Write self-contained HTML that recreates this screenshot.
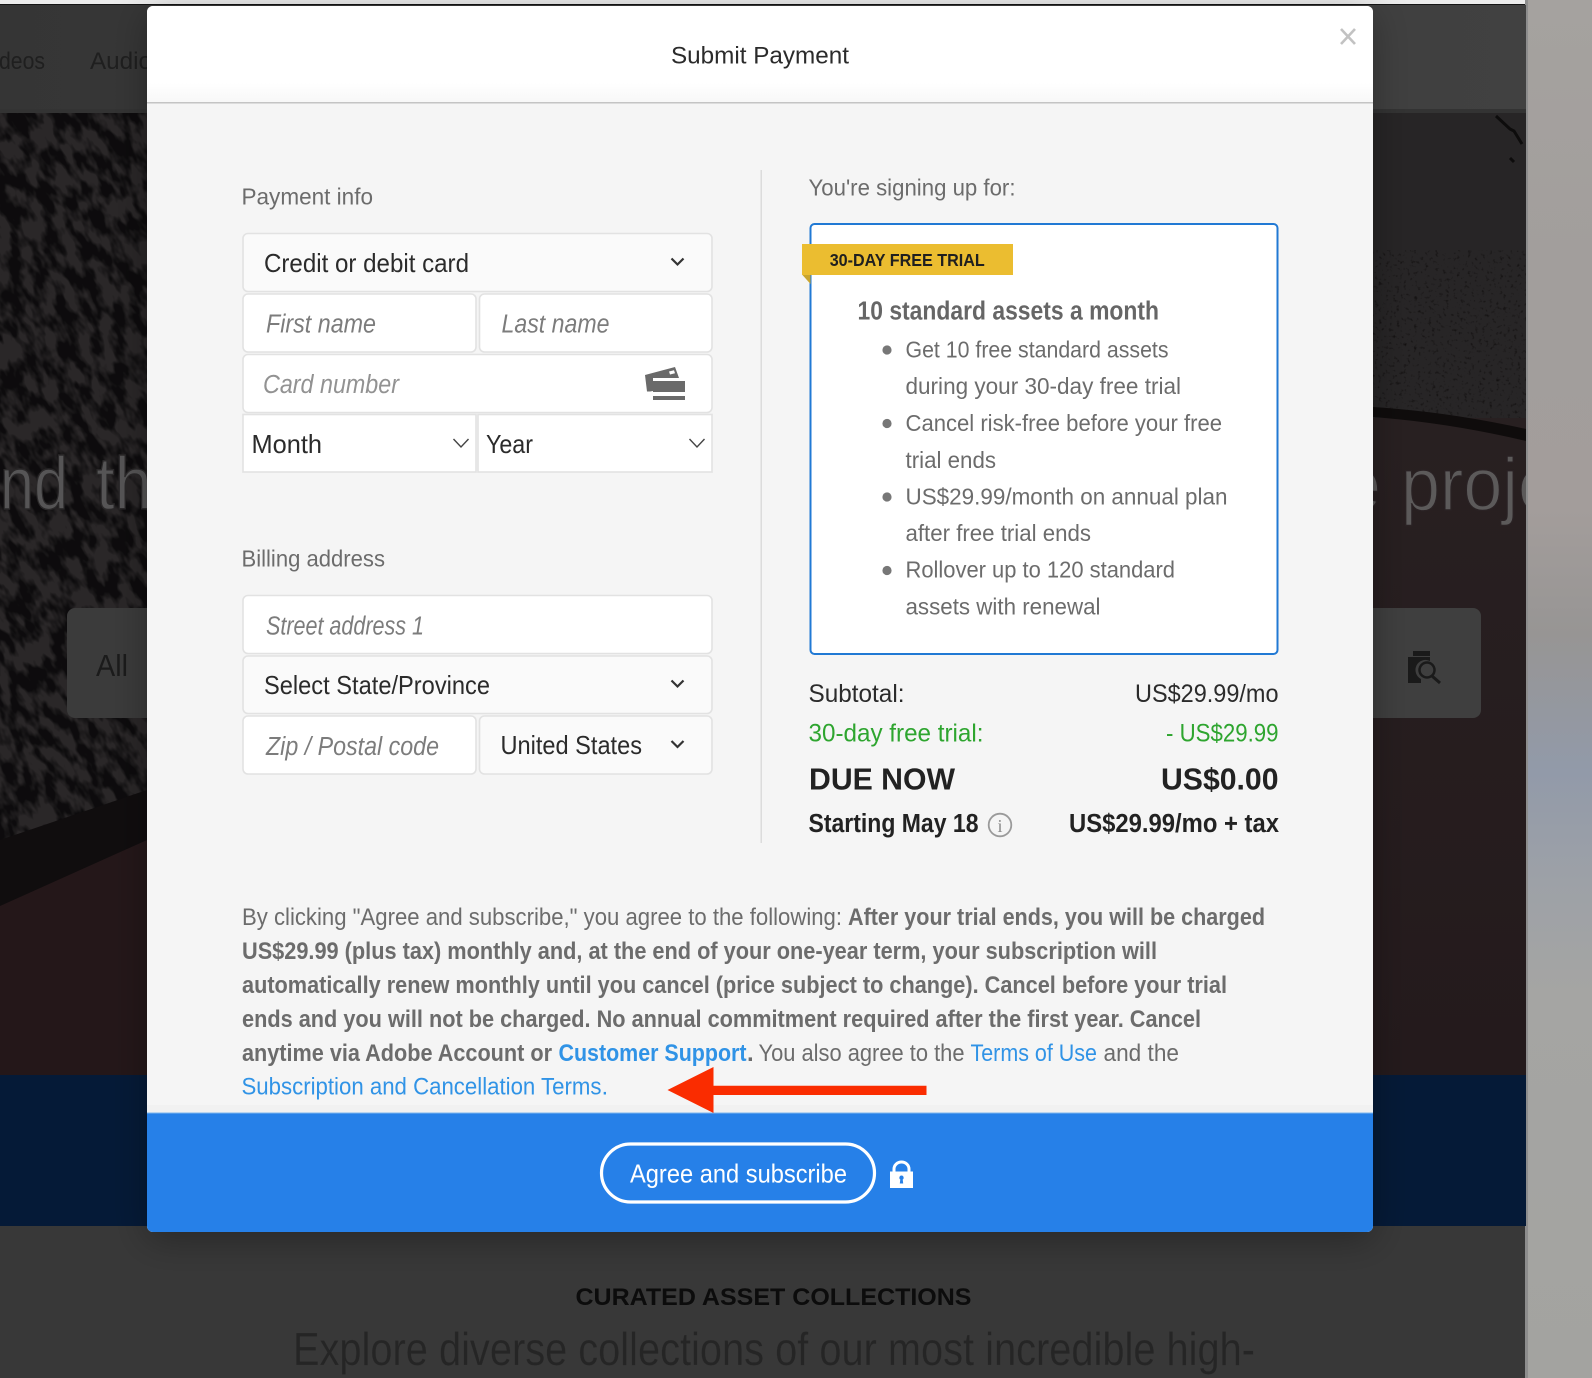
<!DOCTYPE html>
<html lang="en">
<head>
<meta charset="utf-8">
<title>Submit Payment</title>
<style>
html,body{margin:0;padding:0;width:1592px;height:1378px;overflow:hidden;background:#383838}
svg{display:block;position:absolute;left:0;top:0}
text{font-family:"Liberation Sans",sans-serif;white-space:pre}
.g{fill:#6c6c6c}
.d{fill:#2b2b2b}
.ph{fill:#7c7c7c;font-style:italic}
.b{font-weight:700}
.l{fill:#3093e6}
.gr{fill:#2ea52f}
</style>
</head>
<body>
<svg width="1592" height="1378" viewBox="0 0 1592 1378" xmlns="http://www.w3.org/2000/svg">
<defs>
<linearGradient id="strip" x1="0" y1="0" x2="0" y2="1">
<stop offset="0" stop-color="#a5a29f"/><stop offset=".2" stop-color="#a29e9c"/><stop offset=".37" stop-color="#a39d9b"/><stop offset=".46" stop-color="#979594"/><stop offset=".56" stop-color="#929aa9"/><stop offset=".64" stop-color="#9da1a7"/><stop offset=".72" stop-color="#a5a5a3"/><stop offset="1" stop-color="#a3a3a0"/>
</linearGradient>
<linearGradient id="nav" x1="0" y1="0" x2="1" y2="0">
<stop offset="0" stop-color="#353535"/><stop offset="1" stop-color="#414141"/>
</linearGradient>
<linearGradient id="head" x1="0" y1="0" x2="0" y2="1">
<stop offset="0" stop-color="#fff"/><stop offset=".8" stop-color="#fff"/><stop offset="1" stop-color="#f8f8f8"/>
</linearGradient>
<linearGradient id="redr" x1="0" y1="0" x2="0" y2="1">
<stop offset="0" stop-color="#282021"/><stop offset="1" stop-color="#241a1c"/>
</linearGradient>
<filter id="blot" x="0" y="0" width="100%" height="100%" color-interpolation-filters="sRGB">
<feTurbulence type="fractalNoise" baseFrequency=".08 .04" numOctaves="3" seed="7"/>
<feColorMatrix type="matrix" values="0 0 0 0 .05  0 0 0 0 .045  0 0 0 0 .05  4.5 0 0 0 -1.75"/>
</filter>
<filter id="fine" x="0" y="0" width="100%" height="100%" color-interpolation-filters="sRGB">
<feTurbulence type="fractalNoise" baseFrequency=".28" numOctaves="2" seed="3"/>
<feColorMatrix type="matrix" values="0 0 0 0 .07  0 0 0 0 .06  0 0 0 0 .06  3 0 0 0 -1.75"/>
</filter>
<filter id="shadow" x="-10%" y="-10%" width="120%" height="120%">
<feDropShadow dx="0" dy="8" stdDeviation="18" flood-color="#000" flood-opacity=".3"/>
</filter>
<clipPath id="bgclip"><rect x="0" y="5" width="1526" height="1373"/></clipPath>
<clipPath id="modalclip"><rect x="147" y="6" width="1226" height="1226" rx="6"/></clipPath>
<clipPath id="leftblot"><polygon points="0,113 147,113 147,795 0,845"/></clipPath>
<clipPath id="rightfine"><rect x="1373" y="250" width="153" height="170"/></clipPath>
</defs>

<!-- page behind overlay -->
<rect width="1592" height="1378" fill="#383838"/>
<rect x="0" y="0" width="1526" height="4" fill="#ececec"/>
<rect x="0" y="4" width="1526" height="1.5" fill="#151515"/>
<rect x="1526" y="0" width="66" height="1378" fill="url(#strip)"/>
<rect x="1525" y="0" width="3" height="1378" fill="#8d8d8d"/>

<g clip-path="url(#bgclip)">
<rect x="0" y="5" width="1526" height="108" fill="url(#nav)"/>
<rect x="0" y="109" width="1526" height="4" fill="#333"/>
<text x="-1" y="69" font-size="24" fill="#1f1f1f" textLength="46" lengthAdjust="spacingAndGlyphs">deos</text>
<text x="90" y="69" font-size="24" fill="#1f1f1f" textLength="62" lengthAdjust="spacingAndGlyphs">Audio</text>

<!-- hero left -->
<rect x="0" y="113" width="147" height="962" fill="#2a2728"/>
<g clip-path="url(#leftblot)">
<rect x="-500" y="-200" width="1150" height="1400" filter="url(#blot)" transform="rotate(-28 73 480)"/>
</g>
<polygon points="0,840 147,790 147,845 0,908" fill="#100d0e"/>
<polygon points="0,906 147,840 147,1075 0,1075" fill="#241719"/>
<!-- hero right -->
<rect x="1373" y="113" width="153" height="320" fill="#272526"/>
<g clip-path="url(#rightfine)"><rect x="1373" y="250" width="153" height="170" filter="url(#fine)"/></g>
<path d="M1496 116l14 13 4 2 8 13M1510 158l4 4" stroke="#0d0c0c" stroke-width="3" fill="none"/>
<rect x="1373" y="418" width="153" height="657" fill="url(#redr)"/>
<path d="M1373 407 Q1450 412 1526 429 L1526 441 Q1450 423 1373 417Z" fill="#0f0c0c"/>

<text x="0" y="509" font-size="74" fill="#565556" stroke="#2a2829" stroke-width="1.400" textLength="68" lengthAdjust="spacingAndGlyphs">nd</text>
<text x="96" y="509" font-size="74" fill="#565556" stroke="#2a2829" stroke-width="1.400" textLength="56" lengthAdjust="spacingAndGlyphs">th</text>
<text x="1340" y="510" font-size="74" fill="#5c5a5a" stroke="#2a2224" stroke-width="1.400">e</text>
<text x="1401" y="510" font-size="74" fill="#5c5a5a" stroke="#2a2224" stroke-width="1.400" textLength="156" lengthAdjust="spacingAndGlyphs">proje</text>

<!-- search -->
<rect x="67" y="608" width="120" height="110" rx="8" fill="#3b3b3b"/>
<text x="96" y="676" font-size="31" fill="#1b1b1b" textLength="32" lengthAdjust="spacingAndGlyphs">All</text>
<rect x="1340" y="608" width="141" height="110" rx="8" fill="#3f3f3f"/>
<path d="M1413 651h17v5h-17zM1408 657h22v4a10 10 0 0 0-9 18v4h-13z" fill="#1a1a1a"/>
<circle cx="1427" cy="670" r="7.500" fill="#3f3f3f" stroke="#1a1a1a" stroke-width="2.500"/>
<line x1="1432" y1="676" x2="1440" y2="683" stroke="#1a1a1a" stroke-width="3"/>

<!-- navy band -->
<rect x="0" y="1075" width="1526" height="151" fill="#051a37"/>

<!-- below -->
<text x="575.500" y="1305" font-size="24" font-weight="700" fill="#0c0c0c" textLength="396" lengthAdjust="spacingAndGlyphs">CURATED ASSET COLLECTIONS</text>
<text x="293" y="1365" font-size="46" fill="#252525" stroke="#383838" stroke-width=".3" textLength="962" lengthAdjust="spacingAndGlyphs">Explore diverse collections of our most incredible high-</text>
</g>

<!-- modal -->
<rect x="147" y="6" width="1226" height="1226" rx="6" fill="#f5f5f5" filter="url(#shadow)"/>
<g clip-path="url(#modalclip)">
<rect x="147" y="6" width="1226" height="96" fill="url(#head)"/>
<rect x="147" y="102" width="1226" height="1.500" fill="#c4c4c4"/>
<rect x="147" y="1105" width="1226" height="8" fill="#f1f1f1"/>
<rect x="147" y="1113" width="1226" height="119" fill="#2680e8"/>
<rect x="147" y="1112.500" width="1226" height="1" fill="#7db6ee"/>
</g>
<text x="671" y="63.500" font-size="24.500" fill="#2b2b2b" textLength="178" lengthAdjust="spacingAndGlyphs">Submit Payment</text>
<path d="M1341 29l14 15M1355 29l-14 15" stroke="#c2c2c2" stroke-width="2.600" fill="none"/>

<!-- payment form -->
<text x="241.500" y="204.500" font-size="23.500" class="g" textLength="131.500" lengthAdjust="spacingAndGlyphs">Payment info</text>
<g fill="#fff" stroke="#e2e2e2" stroke-width="1.600">
<rect x="243" y="233.500" width="469" height="58" rx="5" fill="#fafafa"/>
<rect x="243" y="294" width="233" height="58" rx="5"/>
<rect x="479.500" y="294" width="232.500" height="58" rx="5"/>
<rect x="243" y="354.500" width="469" height="58" rx="5"/>
<rect x="243" y="414.500" width="233" height="57.500"/>
<rect x="478" y="414.500" width="234" height="57.500"/>
</g>
<text x="264" y="272" font-size="26" class="d" textLength="205" lengthAdjust="spacingAndGlyphs">Credit or debit card</text>
<path d="M671.500 258.500l6 6 6-6" fill="none" stroke="#333" stroke-width="2.200"/>
<text x="266" y="332.500" font-size="25.500" class="ph" textLength="110" lengthAdjust="spacingAndGlyphs">First name</text>
<text x="501.500" y="332.500" font-size="25.500" class="ph" textLength="108" lengthAdjust="spacingAndGlyphs">Last name</text>
<text x="263" y="393" font-size="25.500" class="ph" style="fill:#929292" textLength="136" lengthAdjust="spacingAndGlyphs">Card number</text>
<path fill-rule="evenodd" d="M645 375l30-8 4 11h-26v13l-3 .500h-3zM669 371.500l5-1.300 1 3-5 1.300z" fill="#6a6a6a"/>
<rect x="653" y="381" width="32" height="11" fill="#6a6a6a"/>
<rect x="653" y="396" width="32" height="4" fill="#6a6a6a"/>
<text x="251.500" y="453" font-size="26" class="d" textLength="70.500" lengthAdjust="spacingAndGlyphs">Month</text>
<path d="M453.500 439l7.500 8 7.500-8" fill="none" stroke="#444" stroke-width="1.400"/>
<text x="486" y="453" font-size="26" class="d" textLength="47" lengthAdjust="spacingAndGlyphs">Year</text>
<path d="M689.500 439l7.500 8 7.500-8" fill="none" stroke="#444" stroke-width="1.400"/>

<text x="241.500" y="566.500" font-size="23.500" class="g" textLength="143.500" lengthAdjust="spacingAndGlyphs">Billing address</text>
<g fill="#fff" stroke="#e2e2e2" stroke-width="1.600">
<rect x="243" y="595.500" width="469" height="58" rx="5"/>
<rect x="243" y="656" width="469" height="57.500" rx="5" fill="#fafafa"/>
<rect x="243" y="716" width="233" height="58" rx="5"/>
<rect x="479.500" y="716" width="232.500" height="58" rx="5" fill="#fafafa"/>
</g>
<text x="266" y="634.500" font-size="25.500" class="ph" textLength="158" lengthAdjust="spacingAndGlyphs">Street address 1</text>
<text x="264" y="694" font-size="26" class="d" textLength="226" lengthAdjust="spacingAndGlyphs">Select State/Province</text>
<path d="M671.500 680.500l6 6 6-6" fill="none" stroke="#333" stroke-width="2.200"/>
<text x="266" y="755" font-size="25.500" class="ph" textLength="173" lengthAdjust="spacingAndGlyphs">Zip / Postal code</text>
<text x="500.500" y="754" font-size="26" class="d" textLength="141.500" lengthAdjust="spacingAndGlyphs">United States</text>
<path d="M671.500 741l6 6 6-6" fill="none" stroke="#333" stroke-width="2.200"/>

<rect x="760.500" y="170" width="1.500" height="673" fill="#dcdcdc"/>

<!-- plan -->
<text x="808.500" y="195.500" font-size="23.500" class="g" textLength="207" lengthAdjust="spacingAndGlyphs">You're signing up for:</text>
<rect x="810.500" y="224" width="467" height="430" rx="4" fill="#fff" stroke="#2179d4" stroke-width="2"/>
<polygon points="802,274.500 810.500,274.500 810.500,284" fill="#c9a52e"/>
<rect x="802" y="244" width="211" height="31" fill="#ebbd30"/>
<text x="829.700" y="266" font-size="17.500" font-weight="700" fill="#1f1f1f" textLength="155" lengthAdjust="spacingAndGlyphs">30-DAY FREE TRIAL</text>
<text x="857.500" y="319.500" font-size="25.500" font-weight="700" fill="#666" textLength="301.500" lengthAdjust="spacingAndGlyphs">10 standard assets a month</text>
<g fill="#777">
<circle cx="887" cy="350" r="4.600"/>
<circle cx="887" cy="423.500" r="4.600"/>
<circle cx="887" cy="497" r="4.600"/>
<circle cx="887" cy="570.500" r="4.600"/>
</g>
<g class="g" font-size="23.500">
<text x="905.500" y="357.500" textLength="263" lengthAdjust="spacingAndGlyphs">Get 10 free standard assets</text>
<text x="905.500" y="394" textLength="275.500" lengthAdjust="spacingAndGlyphs">during your 30-day free trial</text>
<text x="905.500" y="431" textLength="316.500" lengthAdjust="spacingAndGlyphs">Cancel risk-free before your free</text>
<text x="905.500" y="468" textLength="90.500" lengthAdjust="spacingAndGlyphs">trial ends</text>
<text x="905.500" y="504.500" textLength="322" lengthAdjust="spacingAndGlyphs">US$29.99/month on annual plan</text>
<text x="905.500" y="541" textLength="185.500" lengthAdjust="spacingAndGlyphs">after free trial ends</text>
<text x="905.500" y="577.500" textLength="269.500" lengthAdjust="spacingAndGlyphs">Rollover up to 120 standard</text>
<text x="905.500" y="614.500" textLength="195" lengthAdjust="spacingAndGlyphs">assets with renewal</text>
</g>

<!-- totals -->
<text x="808.500" y="702" font-size="25" class="d" textLength="96" lengthAdjust="spacingAndGlyphs">Subtotal:</text>
<text x="1135" y="702" font-size="25" class="d" textLength="143.500" lengthAdjust="spacingAndGlyphs">US$29.99/mo</text>
<text x="808.500" y="741.500" font-size="25" class="gr" textLength="175" lengthAdjust="spacingAndGlyphs">30-day free trial:</text>
<text x="1166" y="741.500" font-size="25" class="gr" textLength="112.500" lengthAdjust="spacingAndGlyphs">- US$29.99</text>
<text x="809" y="789.500" font-size="31" font-weight="700" fill="#222" textLength="146" lengthAdjust="spacingAndGlyphs">DUE NOW</text>
<text x="1161" y="789.500" font-size="31" font-weight="700" fill="#222" textLength="117.500" lengthAdjust="spacingAndGlyphs">US$0.00</text>
<text x="808.500" y="832" font-size="25.500" font-weight="700" fill="#222" textLength="170" lengthAdjust="spacingAndGlyphs">Starting May 18</text>
<circle cx="1000" cy="825" r="11.300" fill="none" stroke="#9a9a9a" stroke-width="1.800"/>
<text x="1000" y="832" font-size="18" text-anchor="middle" fill="#8a8a8a" style="font-family:'Liberation Serif',serif">i</text>
<text x="1069" y="832" font-size="25.500" font-weight="700" fill="#222" textLength="210" lengthAdjust="spacingAndGlyphs">US$29.99/mo + tax</text>

<!-- legal -->
<g font-size="24" class="g">
<text x="242" y="925" textLength="600" lengthAdjust="spacingAndGlyphs">By clicking "Agree and subscribe," you agree to the following:</text>
<text x="848" y="925" class="b" textLength="417" lengthAdjust="spacingAndGlyphs">After your trial ends, you will be charged</text>
<text x="242" y="959" class="b" textLength="915" lengthAdjust="spacingAndGlyphs">US$29.99 (plus tax) monthly and, at the end of your one-year term, your subscription will</text>
<text x="242" y="993" class="b" textLength="985" lengthAdjust="spacingAndGlyphs">automatically renew monthly until you cancel (price subject to change). Cancel before your trial</text>
<text x="242" y="1027" class="b" textLength="959" lengthAdjust="spacingAndGlyphs">ends and you will not be charged. No annual commitment required after the first year. Cancel</text>
<text x="242" y="1061" class="b" textLength="310" lengthAdjust="spacingAndGlyphs">anytime via Adobe Account or</text>
<text x="558.500" y="1061" class="b l" textLength="188" lengthAdjust="spacingAndGlyphs">Customer Support</text>
<text x="747" y="1061" class="g" style="font-weight:700">.</text>
<text x="758.500" y="1061" textLength="206" lengthAdjust="spacingAndGlyphs">You also agree to the</text>
<text x="970.500" y="1061" class="l" textLength="126.500" lengthAdjust="spacingAndGlyphs">Terms of Use</text>
<text x="1103.500" y="1061" textLength="75.500" lengthAdjust="spacingAndGlyphs">and the</text>
<text x="241.500" y="1094.500" class="l" textLength="360" lengthAdjust="spacingAndGlyphs">Subscription and Cancellation Terms</text>
<text x="601.500" y="1094.500" class="l">.</text>
</g>

<!-- arrow -->
<polygon points="667.500,1090 713.500,1067 713.500,1085.700 926.500,1085.700 926.500,1095 713.500,1095 713.500,1113" fill="#fa2c00"/>

<!-- CTA -->
<rect x="601.500" y="1144" width="273" height="58" rx="29" fill="none" stroke="#fff" stroke-width="3.200"/>
<text x="630" y="1182.500" font-size="26" fill="#fff" textLength="217" lengthAdjust="spacingAndGlyphs">Agree and subscribe</text>
<path fill-rule="evenodd" d="M890 1171.500h2.500v-2.500a9 8.500 0 0 1 18 0v2.500h2.500v16.500h-23zM895.500 1171.500h12v-2.500a6 5.500 0 0 0-12 0zM901.500 1175.500a2.200 2.200 0 0 0-1.200 4l-.5 4h3.400l-.5-4a2.200 2.200 0 0 0-1.200-4z" fill="#fff"/>
</svg>
</body>
</html>
